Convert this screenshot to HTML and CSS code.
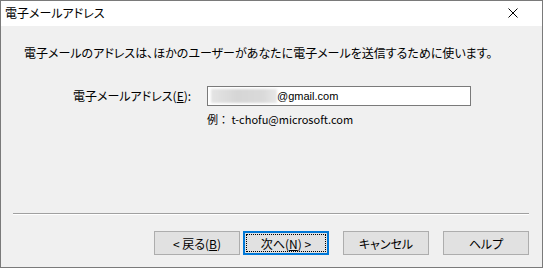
FILE: index.html
```html
<!DOCTYPE html>
<html lang="ja">
<head>
  <meta charset="UTF-8">
  <title>電子メールアドレス</title>
  <link rel="stylesheet" href="styles.css">
</head>
<body>

  <div class="window">
    <div class="titlebar">
      <span class="title">電子メールアドレス</span>
      <svg class="close" width="10" height="10" viewBox="0 0 10 10">
        <path d="M0.5 0.5 L9.5 9.5 M9.5 0.5 L0.5 9.5" stroke="#000" stroke-width="1" fill="none"/>
      </svg>
    </div>

    <div class="content">
      <p class="intro">電子メールのアドレスは、ほかのユーザーがあなたに電子メールを送信するために使います。</p>

      <div class="form">
        <label class="label">電子メールアドレス(<u>E</u>):</label>
        <div class="input">
          <span class="blur"></span>
          <span class="value">@gmail.com</span>
        </div>
        <span></span>
        <div class="example"><span class="prefix">例：</span> t-chofu@microsoft.com</div>
      </div>

      <div class="footer">
        <div class="separator"></div>
        <div class="buttons">
          <button class="btn back">&lt; 戻る(<u>B</u>)</button>
          <button class="btn default"><span class="focus">次へ(<u>N</u>) &gt;</span></button>
          <button class="btn">キャンセル</button>
          <button class="btn">ヘルプ</button>
        </div>
      </div>
    </div>
  </div>

</body>
</html>
```

FILE: styles.css
```css
body {
  margin: 0;
  font-family: "Noto Sans CJK JP", "Noto Sans", sans-serif;
  font-feature-settings: "palt";
  font-size: 12px;
  color: #000;
}

.window {
  width: 543px;
  height: 268px;
  box-sizing: border-box;
  border: 1px solid #7a7a7a;
  display: flex;
  flex-direction: column;
  background: #f0f0f0;
}

.titlebar {
  height: 25px;
  background: #fff;
  display: flex;
  align-items: center;
  justify-content: space-between;
  padding: 0 24px 0 4px;
  flex-shrink: 0;
}

.title {
  font-size: 12px;
  line-height: 16px;
  margin-top: -1px;
}

.close {
  display: block;
  margin-top: -1px;
}

.content {
  flex: 1;
  display: flex;
  flex-direction: column;
  padding: 19px 0 12px 0;
}

.intro {
  margin: 0 0 0 23px;
  font-size: 12px;
  line-height: 16px;
}

.form {
  display: grid;
  grid-template-columns: 134px 264px;
  align-items: center;
  margin: 25px 0 0 72px;
  row-gap: 6px;
}

.label {
  font-size: 12px;
  line-height: 16px;
}

.input {
  height: 20px;
  box-sizing: border-box;
  border: 1px solid #7a7a7a;
  background: #fff;
  display: flex;
  align-items: center;
  padding-left: 3px;
}

.blur {
  width: 66px;
  height: 14px;
  background: linear-gradient(90deg, #e4e4e4, #d6d6d6 40%, #dadada 80%, #e8e8e8);
  filter: blur(1px);
}

.value {
  font-family: "Liberation Sans", sans-serif;
  font-size: 11px;
}

.example {
  font-size: 11px;
  line-height: 14px;
}

.prefix {
  font-feature-settings: normal;
}

.footer {
  margin-top: auto;
}

.separator {
  height: 1px;
  background: #a0a0a0;
  border-bottom: 1px solid #fff;
  margin: 0 13px 0 12px;
}

.buttons {
  display: flex;
  justify-content: flex-end;
  gap: 14px;
  padding-right: 13px;
  margin-top: 16px;
}

.btn {
  width: 86px;
  height: 24px;
  box-sizing: border-box;
  border: 1px solid #adadad;
  background: #e1e1e1;
  font-family: inherit;
  font-feature-settings: "palt";
  font-size: 12px;
  color: #000;
  padding: 0;
  display: flex;
  align-items: center;
  justify-content: center;
}

.btn.back {
  margin-right: -11px;
}

.btn.default {
  border: 2px solid #0078d7;
  padding: 1px;
}

.focus {
  flex: 1;
  align-self: stretch;
  display: flex;
  align-items: center;
  justify-content: center;
  border: 1px dotted #000;
}
```
